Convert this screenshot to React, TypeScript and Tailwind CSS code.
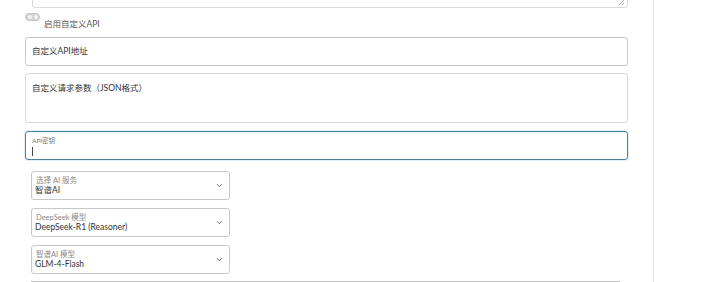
import React from "react";

const font = { fontFamily: 'Lato, "Noto Sans CJK SC", sans-serif' };

function Chevron() {
  return (
    <svg width="7" height="5" viewBox="0 0 7 5" className="shrink-0">
      <path d="M1 1.2 L3.5 3.7 L6 1.2" fill="none" stroke="#666" strokeWidth="1" />
    </svg>
  );
}

function Select({ label, value }: { label: string; value: string }) {
  return (
    <div className="h-[29px] w-[199px] border border-[#c8c8c8] rounded-[3px] bg-white flex items-center pl-[3px] pr-[6px]">
      <div className="flex-1 flex flex-col leading-none">
        <span className="text-[7.5px] text-[#8a8a8a] leading-[9px] pl-[1px]">{label}</span>
        <span className="text-[8.5px] text-[#333] leading-[10px]">{value}</span>
      </div>
      <Chevron />
    </div>
  );
}

export default function App() {
  return (
    <div className="w-[720px] h-[282px] bg-white overflow-hidden flex" style={font}>
      <div className="w-[654px] border-r border-[#e4e4e4] h-full flex flex-col pl-[25px] pr-[25px] relative">
        <div className="relative ml-[7px] -mt-[20px] h-[28px] border border-[#d8d8d8] rounded-[3px] shrink-0">
          <svg width="7" height="7" viewBox="0 0 7 7" className="absolute right-[2px] bottom-[1px]">
            <path d="M6 1 L1 6 M6 4 L4 6" stroke="#999" strokeWidth="0.8" />
          </svg>
        </div>
        <div className="flex items-center mt-[4px] h-[10px] shrink-0">
          <div className="w-[15px] h-[8px] rounded-full bg-[#d4d4d4] border border-[#c4c4c4] flex items-center justify-between px-[1.5px]">
            <span className="w-[4px] h-[4px] rounded-full bg-[#f4f4f4]" />
            <span className="w-[4px] h-[4px] rounded-full bg-[#f4f4f4]" />
          </div>
        </div>
        <div className="text-[8.5px] text-[#555] ml-[19px] -mt-[3px] leading-[10px] shrink-0">启用自定义API</div>
        <div className="mt-[8px] h-[29px] border border-[#c8c8c8] rounded-[3px] flex items-center px-[6px] shrink-0">
          <span className="text-[8.5px] text-[#333]">自定义API地址</span>
        </div>
        <div className="mt-[7px] h-[50px] border border-[#dadada] rounded-[3px] px-[6px] pt-[6px] shrink-0 leading-[10px]">
          <span className="text-[8.5px] text-[#333] leading-[10px]">自定义请求参数（JSON格式）</span>
        </div>
        <div className="mt-[8px] h-[29px] border border-[#4f7e9c] rounded-[3px] shadow-[0_0_0_1px_rgba(180,215,235,0.35)] flex flex-col px-[6px] pt-[5px] shrink-0">
          <span className="text-[6.5px] text-[#777] leading-[8px]">API密钥</span>
          <span className="w-px h-[9px] bg-[#444] mt-[2px]" />
        </div>
        <div className="ml-[6px] mt-[11px] flex flex-col gap-[8px] shrink-0">
          <Select label="选择 AI 服务" value="智谱AI" />
          <Select label="DeepSeek 模型" value="DeepSeek-R1 (Reasoner)" />
          <Select label="智谱AI 模型" value="GLM-4-Flash" />
        </div>
        <div className="ml-[6px] mr-[8px] mt-[7px] border-t border-[#bcbcbc] shrink-0" />
      </div>
    </div>
  );
}
